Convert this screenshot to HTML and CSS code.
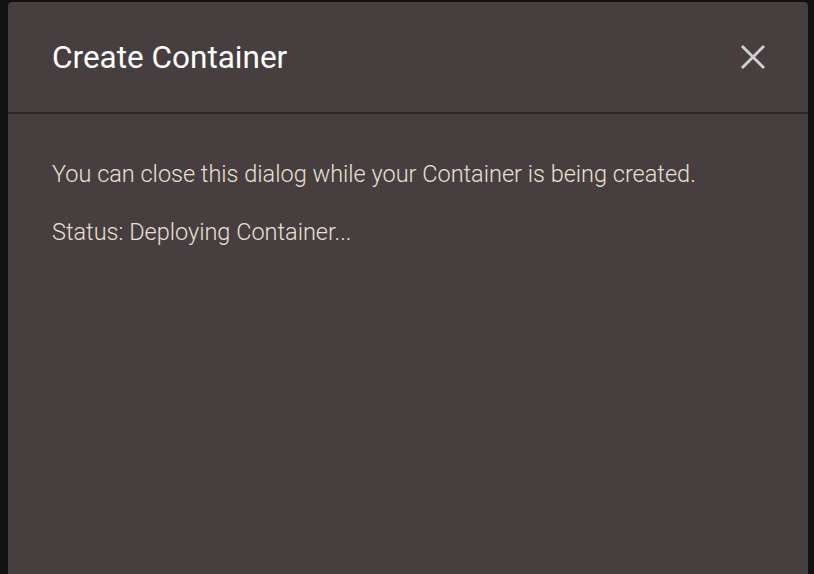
FILE: index.html
```html
<!DOCTYPE html>
<html>
<head>
<meta charset="utf-8">
<link rel="stylesheet" href="styles.css">
</head>
<body>
<div class="dialog">
  <div class="dialog-header">
    <h2 class="dialog-title">Create Container</h2>
    <button class="close-btn" aria-label="Close">
      <svg width="26" height="26" viewBox="0 0 26 26"><path d="M2 2 L24 24 M24 2 L2 24" stroke="#cfcfcf" stroke-width="3" stroke-linecap="butt"/></svg>
    </button>
  </div>
  <div class="dialog-body">
    <p class="msg">You can close this dialog while your Container is being created.</p>
    <p class="msg">Status: Deploying Container...</p>
  </div>
</div>
</body>
</html>
```
FILE: styles.css
```css
html, body {
  margin: 0;
  height: 100%;
  overflow: hidden;
}
body {
  background: #121010;
  padding: 2px 0 0 8px;
  box-sizing: border-box;
  font-family: Roboto, "Liberation Sans", sans-serif;
}
.dialog {
  width: 800px;
  height: 600px;
  background: #463e3f;
  border-radius: 4px 4px 0 0;
}
.dialog-header {
  height: 112px;
  box-sizing: border-box;
  border-bottom: 2px solid #2b2627;
  display: flex;
  align-items: center;
  justify-content: space-between;
  padding: 0 42px 0 44px;
}
.dialog-title {
  margin: 0;
  font-size: 31.5px;
  font-weight: 400;
  color: #ffffff;
}
.close-btn {
  background: none;
  border: 0;
  padding: 0;
  width: 26px;
  height: 26px;
  display: flex;
}
.dialog-body {
  padding: 42px 44px;
}
.msg {
  margin: 0 0 22px;
  font-size: 23.5px;
  font-weight: 300;
  line-height: 36px;
  color: #e8e0d4;
}
```
